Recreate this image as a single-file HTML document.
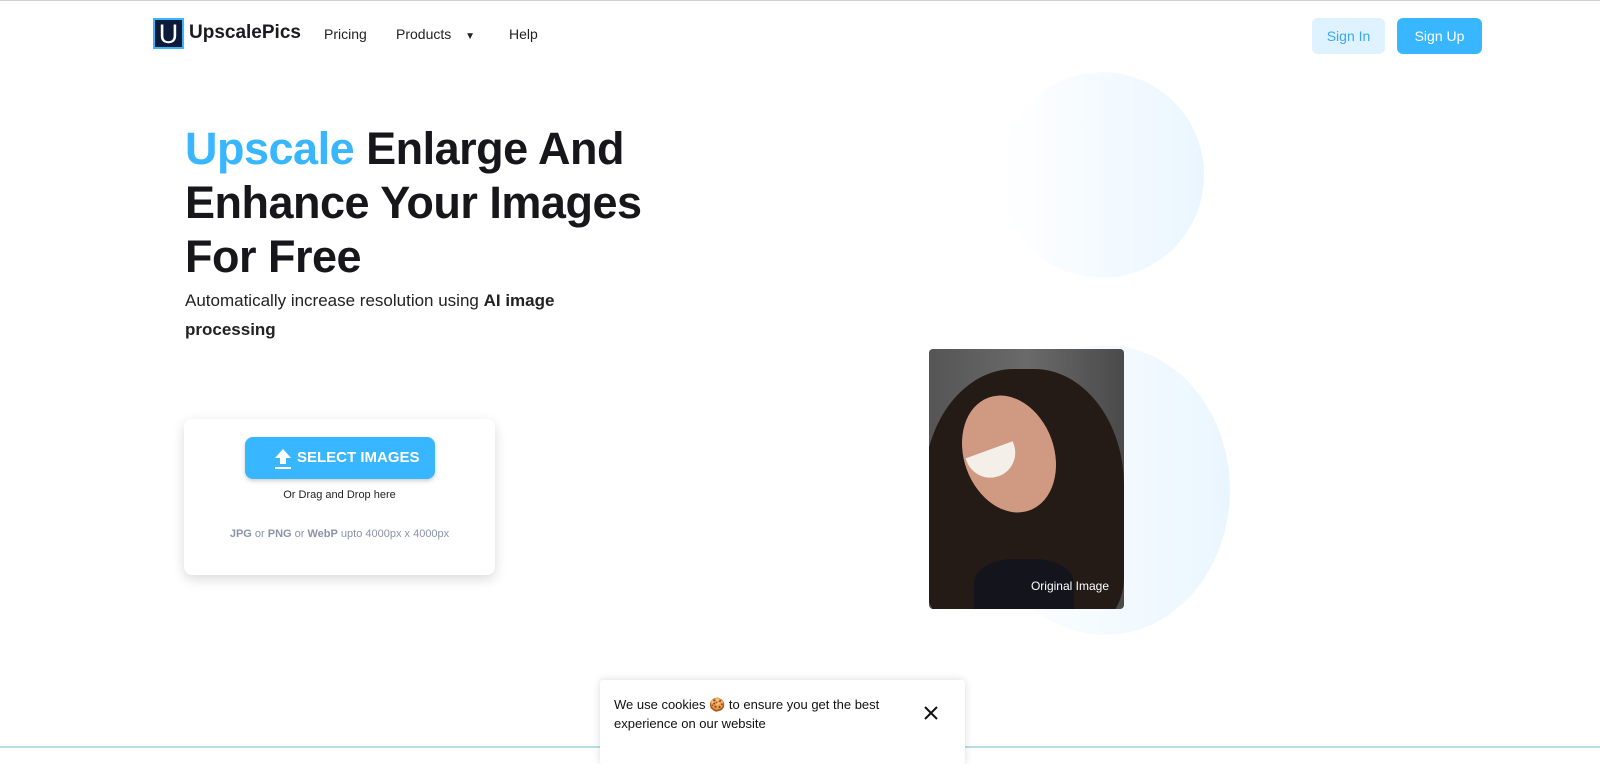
<!DOCTYPE html>
<html><head><meta charset="utf-8"><style>
*{margin:0;padding:0;box-sizing:border-box}
body{width:1600px;height:764px;overflow:hidden;background:#fff;font-family:"Liberation Sans",sans-serif;position:relative;color:#1b1b1f}
.top{position:absolute;left:0;top:0;width:1600px;height:1px;background:#d0d0d0}
.logo{position:absolute;left:153px;top:18px;width:31px;height:31px;background:#0d1b3a;border:2px solid #38b6ff;color:#fff;font-size:27px;text-align:center;line-height:28px}
.brand{position:absolute;left:189px;top:22px;font-weight:bold;font-size:19px;color:#1b1b1f}
.nav{position:absolute;top:26px;font-size:14px;color:#222}
.btn{position:absolute;top:18px;height:36px;border-radius:6px;font-size:14px;text-align:center;line-height:36px}
h1{position:absolute;left:185px;top:122px;font-size:45px;line-height:54px;font-weight:bold;letter-spacing:-0.5px;color:#17171b}
.sub{position:absolute;left:185px;top:286px;font-size:17px;line-height:29px;color:#222;width:400px}
.card{position:absolute;left:184px;top:419px;width:311px;height:156px;background:#fff;border-radius:8px;box-shadow:0 4px 12px rgba(0,0,0,.15)}
.sel{position:absolute;left:61px;top:18px;width:190px;height:42px;background:#38b6ff;border-radius:8px;color:#fff;font-weight:bold;font-size:15px;line-height:42px;padding-left:52px;box-shadow:0 2px 4px rgba(0,0,0,.2)}
.circle{position:absolute;border-radius:50%;background:linear-gradient(90deg,#fff,#eaf6ff)}
.photo{position:absolute;left:929px;top:349px;width:195px;height:260px;border-radius:4px;overflow:hidden;background:linear-gradient(90deg,#555,#6a6a6a 50%,#4a4a4a)}
.cookie{position:absolute;left:600px;top:680px;width:365px;height:84px;background:#fff;box-shadow:0 0 8px rgba(0,0,0,.15);border-radius:3px}
</style></head><body>
<div class="top"></div>
<div class="logo">U</div>
<div class="brand">UpscalePics</div>
<div class="nav" style="left:324px">Pricing</div>
<div class="nav" style="left:396px">Products <span style="font-size:10px;margin-left:10px">▼</span></div>
<div class="nav" style="left:509px">Help</div>
<div class="btn" style="left:1312px;width:73px;background:#dff2ff;color:#38a8f0">Sign In</div>
<div class="btn" style="left:1397px;width:85px;background:#38b6ff;color:#fff">Sign Up</div>
<div class="circle" style="left:1000px;top:72px;width:204px;height:206px"></div>
<div class="circle" style="left:980px;top:345px;width:250px;height:290px"></div>
<h1><span style="color:#38b6ff">Upscale</span> Enlarge And<br>Enhance Your Images<br>For Free</h1>
<div class="sub">Automatically increase resolution using <b>AI image processing</b></div>
<div class="card">
<div class="sel"><svg style="position:absolute;left:28px;top:11px" width="20" height="22" viewBox="0 0 20 22"><path d="M10 1L2 10h5v6h6v-6h5z" fill="#fff"/><rect x="2" y="19" width="16" height="2" fill="#fff"/></svg>SELECT IMAGES</div>
<div style="position:absolute;top:70px;width:100%;text-align:center;font-size:11px;color:#222">Or Drag and Drop here</div>
<div style="position:absolute;top:109px;width:100%;text-align:center;font-size:11px;color:#8a93a8"><b>JPG</b> or <b>PNG</b> or <b>WebP</b> upto 4000px x 4000px</div>
</div>
<div class="photo">
<div style="position:absolute;left:-5px;top:20px;width:200px;height:260px;border-radius:45% 45% 20% 20%;background:#241a16"></div>
<div style="position:absolute;left:35px;top:45px;width:90px;height:120px;border-radius:50%;background:#d09a82;transform:rotate(-20deg)"></div>
<div style="position:absolute;left:40px;top:100px;width:50px;height:28px;border-radius:0 0 25px 25px;background:#f4efe9;transform:rotate(-20deg)"></div>
<div style="position:absolute;left:45px;top:210px;width:100px;height:60px;background:#14141c;border-radius:40% 40% 0 0"></div>
<div style="position:absolute;right:15px;bottom:16px;color:#fff;font-size:12px">Original Image</div>
</div>
<div style="position:absolute;left:0;top:746px;width:1600px;height:2px;background:#b8dfe6"></div>
<div class="cookie">
<div style="position:absolute;left:14px;top:15px;font-size:13px;line-height:19px;color:#111">We use cookies 🍪 to ensure you get the best<br>experience on our website</div>
<svg style="position:absolute;left:324px;top:26px" width="14" height="14" viewBox="0 0 14 14"><path d="M1 1L13 13M13 1L1 13" stroke="#111" stroke-width="2"/></svg>
</div>
</body></html>
